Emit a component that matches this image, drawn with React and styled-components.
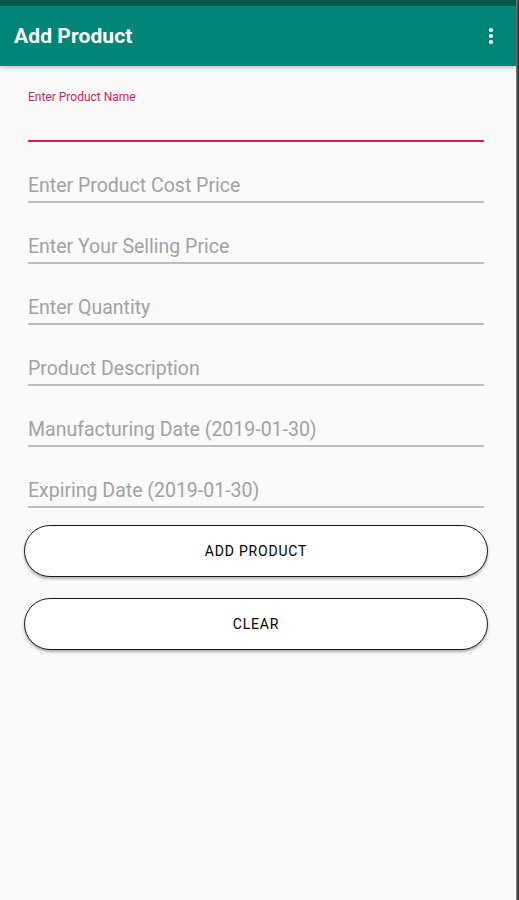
import React, { useState } from 'react'
import styled, { createGlobalStyle } from 'styled-components'

const fields = [
  'Enter Product Cost Price',
  'Enter Your Selling Price',
  'Enter Quantity',
  'Product Description',
  'Manufacturing Date (2019-01-30)',
  'Expiring Date (2019-01-30)',
]

const App = () => {
  const [name, setName] = useState('')

  return (
    <>
      <GLOBALSTYLED />
      <FRAMESTYLED>
        <SCREENSTYLED>
          <STATUSBARSTYLED />
          <APPBARSTYLED>
            <TITLESTYLED>Add Product</TITLESTYLED>
            <MENUBUTTONSTYLED aria-label='More options'>
              <svg width='6' height='18' viewBox='0 0 6 18'>
                <circle cx='3' cy='3' r='2.1' fill='#fff' />
                <circle cx='3' cy='9' r='2.1' fill='#fff' />
                <circle cx='3' cy='15' r='2.1' fill='#fff' />
              </svg>
            </MENUBUTTONSTYLED>
          </APPBARSTYLED>
          <FORMSTYLED>
            <FIELDSTYLED focused>
              <LABELSTYLED>Enter Product Name</LABELSTYLED>
              <INPUTSTYLED
                type='text'
                value={name}
                onChange={(e) => setName(e.target.value)}
              />
            </FIELDSTYLED>
            {fields.map((placeholder) => (
              <FIELDSTYLED key={placeholder}>
                <INPUTSTYLED type='text' placeholder={placeholder} />
              </FIELDSTYLED>
            ))}
            <BUTTONSSTYLED>
              <BUTTONSTYLED type='button'>Add Product</BUTTONSTYLED>
              <BUTTONSTYLED type='button' onClick={() => setName('')}>
                Clear
              </BUTTONSTYLED>
            </BUTTONSSTYLED>
          </FORMSTYLED>
        </SCREENSTYLED>
        <EDGESTYLED />
      </FRAMESTYLED>
    </>
  )
}

export default App

const GLOBALSTYLED = createGlobalStyle`
  body {
    margin: 0;
    background: #fafafa;
    font-family: Roboto, 'Noto Sans', sans-serif;
  }
`
const FRAMESTYLED = styled.div`
  display: flex;
  width: 519px;
  height: 900px;
  overflow: hidden;
`
const SCREENSTYLED = styled.div`
  flex: 1;
  display: flex;
  flex-direction: column;
  background: #fafafa;
`
const EDGESTYLED = styled.div`
  width: 3px;
  background: linear-gradient(90deg, #8a8a8a, #1c1c1c);
`
const STATUSBARSTYLED = styled.div`
  height: 6px;
  background: #00574b;
`
const APPBARSTYLED = styled.header`
  height: 60px;
  display: flex;
  align-items: center;
  justify-content: space-between;
  padding: 0 22px 0 14px;
  background: #008577;
  box-shadow: 0 2px 4px rgba(0, 0, 0, 0.22);
  position: relative;
  z-index: 1;
`
const TITLESTYLED = styled.h1`
  margin: 0;
  font-size: 21px;
  font-weight: 700;
  color: #ffffff;
  letter-spacing: 0.1px;
`
const MENUBUTTONSTYLED = styled.button`
  display: flex;
  padding: 0;
  border: none;
  background: none;
  cursor: pointer;
`
const FORMSTYLED = styled.form`
  display: flex;
  flex-direction: column;
  gap: 33px;
  padding: 24px 28px 0 24px;
`
const FIELDSTYLED = styled.div`
  display: flex;
  flex-direction: column;
  margin: 0 4px;
  padding-bottom: 4px;
  border-bottom: 2px solid ${(props) => (props.focused ? '#d81b60' : '#bdbdbd')};
`
const LABELSTYLED = styled.label`
  font-size: 12px;
  line-height: 14px;
  color: #d81b60;
  margin-bottom: 10px;
`
const INPUTSTYLED = styled.input`
  height: 22px;
  padding: 0;
  border: none;
  outline: none;
  background: transparent;
  font-family: Roboto, 'Noto Sans', sans-serif;
  font-size: 19.5px;
  line-height: 22px;
  color: #333;
  caret-color: #d81b60;
  &::placeholder {
    color: #a2a2a2;
  }
`
const BUTTONSSTYLED = styled.div`
  display: flex;
  flex-direction: column;
  gap: 21px;
  margin-top: -16px;
`
const BUTTONSTYLED = styled.button`
  height: 52px;
  border: 1.5px solid #1a1a1a;
  border-radius: 26px;
  background: #ffffff;
  box-shadow: 0 2px 3px rgba(0, 0, 0, 0.3);
  font-family: Roboto, 'Noto Sans', sans-serif;
  font-size: 14px;
  font-weight: 400;
  letter-spacing: 0.8px;
  text-transform: uppercase;
  color: #000000;
  cursor: pointer;
`
